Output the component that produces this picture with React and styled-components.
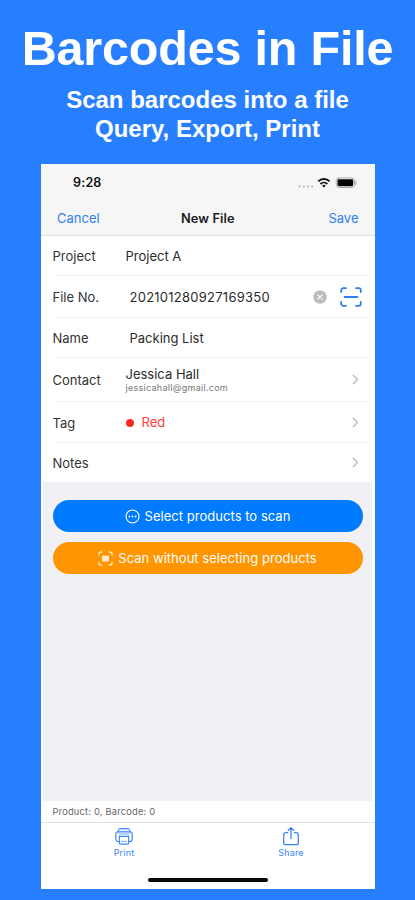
import React from 'react'
import styled, { createGlobalStyle } from 'styled-components'

const GlobalStyle = createGlobalStyle`
* {
    box-sizing: border-box;
}
body {
    margin: 0;
    background: #277fff;
}
`

const Page = styled.div`
    display: flex;
    flex-direction: column;
    align-items: center;
    width: 415px;
    height: 900px;
    overflow: hidden;
    background: #277fff;
    font-family: Inter, "Liberation Sans", sans-serif;
`

const Title = styled.h1`
    margin: 20px 0 0;
    height: 65px;
    color: #fff;
    font: bold 48.5px/56px "Liberation Sans", Arial, sans-serif;
    letter-spacing: -0.2px;
    white-space: nowrap;
`

const Subtitle = styled.p`
    margin: 0;
    height: 79px;
    color: #fff;
    text-align: center;
    white-space: nowrap;
    font: bold 24px/29px "Liberation Sans", Arial, sans-serif;
`

const Phone = styled.div`
    display: flex;
    flex-direction: column;
    width: 334px;
    height: 725px;
    background: #fff;
`

const Header = styled.header`
    height: 72px;
    background: #f6f6f7;
    border-bottom: 1px solid #e0e0e1;
`

const StatusBar = styled.div`
    display: flex;
    align-items: center;
    justify-content: space-between;
    height: 37px;
    padding: 0 18px 0 32.5px;
`

const Time = styled.span`
    font-size: 12.5px;
    font-weight: 600;
    letter-spacing: 0.2px;
    color: #111;
`

const NavBar = styled.nav`
    display: grid;
    grid-template-columns: 1fr auto 1fr;
    align-items: center;
    height: 34px;
    padding: 0 16px 0 16.5px;
`

const NavLink = styled.span`
    font-size: 13px;
    color: #2f80f6;
    text-align: ${(p) => p.$align || 'left'};
`

const NavTitle = styled.span`
    font-size: 12.8px;
    font-weight: 600;
    letter-spacing: 0.1px;
    color: #1c1c1d;
`

const Form = styled.div`
    padding: 0 7px 0 12px;
`

const Row = styled.div`
    display: flex;
    align-items: center;
    height: ${(p) => p.$height}px;
    padding-right: 9px;
    background: linear-gradient(#f1f1f2, #f1f1f2) 3px 100% / 100% ${(p) => (p.$last ? 0 : 1)}px no-repeat;
`

const Label = styled.span`
    width: 73px;
    font-size: 13px;
    color: #333;
`

const Value = styled.div`
    flex: 1;
    display: flex;
    flex-direction: ${(p) => (p.$stacked ? 'column' : 'row')};
    align-items: ${(p) => (p.$stacked ? 'flex-start' : 'center')};
    padding-left: ${(p) => p.$indent || 0}px;
    font-size: 13px;
    line-height: 15px;
    letter-spacing: ${(p) => p.$spacing || '0'};
    color: ${(p) => p.$color || '#2b2b2b'};
`

const Email = styled.span`
    font-size: 9px;
    line-height: 11px;
    letter-spacing: 0.28px;
    color: #777;
`

const Dot = styled.i`
    width: 8px;
    height: 8px;
    margin-right: 8px;
    border-radius: 50%;
    background: #ff2a1f;
`

const Icon = styled.svg`
    display: block;
    flex: none;
    fill: none;
    stroke: currentColor;
    stroke-linecap: round;
    stroke-linejoin: round;
    color: ${(p) => p.$color || '#fff'};
    margin: ${(p) => p.$margin || '0'};
`

const Actions = styled.main`
    flex: 1;
    display: flex;
    flex-direction: column;
    gap: 10px;
    margin: 0 3px 0 2px;
    padding: 18px 9px 0 10px;
    background: #f0f0f5;
`

const Button = styled.button`
    display: flex;
    align-items: center;
    justify-content: center;
    gap: 5px;
    height: 32px;
    padding: 0;
    border: 0;
    border-radius: 16px;
    background: ${(p) => p.$color};
    color: #fff;
    font: 13px Inter, sans-serif;
    letter-spacing: 0.03px;
`

const Counts = styled.div`
    height: 22px;
    padding-left: 12px;
    border-bottom: 1px solid #e2e2e4;
    font-size: 9.3px;
    line-height: 21px;
    letter-spacing: 0.2px;
    color: #666;
`

const TabBar = styled.div`
    display: grid;
    grid-template-columns: 1fr 1fr;
    height: 55px;
`

const Tab = styled.div`
    display: flex;
    flex-direction: column;
    align-items: center;
    padding-top: 4px;
    font-size: 9px;
    line-height: 13px;
    letter-spacing: 0.2px;
    color: #3d84fa;
`

const HomeBar = styled.div`
    align-self: center;
    width: 120px;
    height: 4px;
    border-radius: 2px;
    margin-bottom: 7px;
    background: #080808;
`

const StatusIcons = () => (
    <Icon width="60" height="14" viewBox="0 0 60 14" $color="#111">
        <g fill="#b4b4b5" stroke="none">
            <circle cx="2.5" cy="10.5" r="1.1" />
            <circle cx="6.8" cy="10.5" r="1.1" />
            <circle cx="11" cy="10.5" r="1.1" />
            <circle cx="15.2" cy="10.5" r="1.1" />
        </g>
        <g strokeWidth="1.8" strokeLinecap="butt">
            <path d="M21.2 5.3a8.2 8.2 0 0 1 11.4 0" />
            <path d="M23.4 8a5 5 0 0 1 7 0" />
        </g>
        <path d="M25.1 9.7a2.6 2.6 0 0 1 3.6 0L26.9 11.6z" fill="currentColor" stroke="none" />
        <rect x="39.2" y="1.9" width="18.3" height="9.6" rx="2.8" stroke="#a5a5a6" strokeWidth="0.9" />
        <rect x="40.5" y="3.2" width="15.7" height="7" rx="1.4" fill="#050505" stroke="none" />
        <path d="M58.8 5.6v2.6" stroke="#a5a5a6" strokeWidth="1.1" />
    </Icon>
)

const ClearIcon = () => (
    <Icon width="14" height="14" viewBox="0 0 14 14" $margin="0 13px 0 0">
        <circle cx="7" cy="7" r="6.7" fill="#bcbcbe" stroke="none" />
        <path d="M4.8 4.8l4.4 4.4M9.2 4.8L4.8 9.2" strokeWidth="1.2" />
    </Icon>
)

const ScanIcon = () => (
    <Icon width="22" height="20" viewBox="0 0 22 20" $color="#2f80f6" $margin="0 -3px 0 0" strokeWidth="1.8">
        <path d="M1.2 5V3.2a2 2 0 0 1 2-2H6M16 1.2h2.8a2 2 0 0 1 2 2V5M20.8 14.8v2a2 2 0 0 1-2 2H16M6 18.8H3.2a2 2 0 0 1-2-2v-2M4.6 10h12.8" />
    </Icon>
)

const Chevron = () => (
    <Icon width="7" height="11" viewBox="0 0 7 11" $color="#bdbdc0" $margin="0 0 1px" strokeWidth="1.4">
        <path d="M1.3 1.3L5.5 5.5L1.3 9.7" />
    </Icon>
)

const MoreIcon = () => (
    <Icon width="15" height="15" viewBox="0 0 15 15">
        <circle cx="7.5" cy="7.5" r="6.5" strokeWidth="1.1" />
        <path d="M4.4 7.5h.01M7.5 7.5h.01M10.6 7.5h.01" strokeWidth="1.8" />
    </Icon>
)

const ViewfinderIcon = () => (
    <Icon width="15" height="15" viewBox="0 0 15 15">
        <path
            d="M1 4V2.5A1.5 1.5 0 0 1 2.5 1H4M11 1h1.5A1.5 1.5 0 0 1 14 2.5V4M14 11v1.5a1.5 1.5 0 0 1-1.5 1.5H11M4 14H2.5A1.5 1.5 0 0 1 1 12.5V11"
            strokeWidth="1.1"
        />
        <rect x="4" y="4.5" width="7" height="6" rx="1" fill="currentColor" fillOpacity="0.8" stroke="none" />
    </Icon>
)

const PrinterIcon = () => (
    <Icon width="18" height="19" viewBox="0 0 18 19" $color="#3d84fa" strokeWidth="1.2">
        <path d="M2.8 4.8l.5-1.4a2.6 2.6 0 0 1 2.4-1.8h6.6a2.6 2.6 0 0 1 2.4 1.8l.5 1.4" />
        <path d="M4.3 14.5H3a2.2 2.2 0 0 1-2.2-2.2V7A2.2 2.2 0 0 1 3 4.8h12A2.2 2.2 0 0 1 17.2 7v5.3a2.2 2.2 0 0 1-2.2 2.2h-1.3" />
        <path d="M4.3 9.4h9.400v6a1.800 1.800 0 0 1-1.800 1.800H6.100a1.800 1.800 0 0 1-1.800-1.800z" />
        <path d="M6.500 14.300h5M3.600 7h10.800" strokeWidth="0.700" />
    </Icon>
)

const ShareIcon = () => (
    <Icon width="18" height="19" viewBox="0 1 18 19" $color="#3d84fa" strokeWidth="1.3">
        <path d="M5.6 6.7H3.7a2 2 0 0 0-2 2v8a2 2 0 0 0 2 2h10.600a2 2 0 0 0 2-2v-8a2 2 0 0 0-2-2h-1.900" />
        <path d="M9 12.500V1.800M6.200 4.400L9 1.700l2.800 2.700" />
    </Icon>
)

export default function App() {
    return (
        <Page>
            <GlobalStyle />
            <Title>Barcodes in File</Title>
            <Subtitle>
                Scan barcodes into a file
                <br />
                Query, Export, Print
            </Subtitle>
            <Phone>
                <Header>
                    <StatusBar>
                        <Time>9:28</Time>
                        <StatusIcons />
                    </StatusBar>
                    <NavBar>
                        <NavLink>Cancel</NavLink>
                        <NavTitle>New File</NavTitle>
                        <NavLink $align="right">Save</NavLink>
                    </NavBar>
                </Header>
                <Form>
                    <Row $height={40}>
                        <Label>Project</Label>
                        <Value>Project A</Value>
                    </Row>
                    <Row $height={42}>
                        <Label>File No.</Label>
                        <Value $indent={4} $spacing="0.25px">202101280927169350</Value>
                        <ClearIcon />
                        <ScanIcon />
                    </Row>
                    <Row $height={40}>
                        <Label>Name</Label>
                        <Value $indent={4}>Packing List</Value>
                    </Row>
                    <Row $height={44}>
                        <Label>Contact</Label>
                        <Value $stacked>
                            Jessica Hall
                            <Email>jessicahall@gmail.com</Email>
                        </Value>
                        <Chevron />
                    </Row>
                    <Row $height={41}>
                        <Label>Tag</Label>
                        <Value $color="#ff3b36">
                            <Dot />
                            Red
                        </Value>
                        <Chevron />
                    </Row>
                    <Row $height={39} $last>
                        <Label>Notes</Label>
                        <Value />
                        <Chevron />
                    </Row>
                </Form>
                <Actions>
                    <Button $color="#007aff">
                        <MoreIcon />
                        Select products to scan
                    </Button>
                    <Button $color="#ff9500">
                        <ViewfinderIcon />
                        Scan without selecting products
                    </Button>
                </Actions>
                <Counts>Product: 0, Barcode: 0</Counts>
                <TabBar>
                    <Tab>
                        <PrinterIcon />
                        Print
                    </Tab>
                    <Tab>
                        <ShareIcon />
                        Share
                    </Tab>
                </TabBar>
                <HomeBar />
            </Phone>
        </Page>
    )
}
